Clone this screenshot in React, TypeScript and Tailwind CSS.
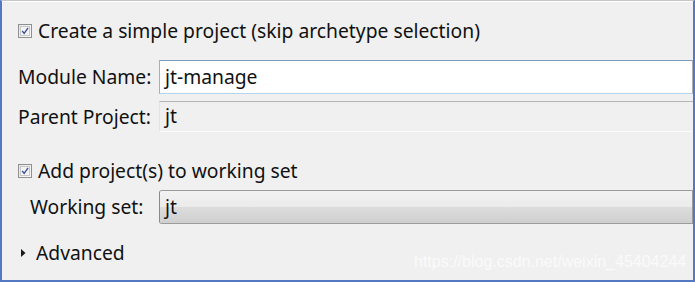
import React from 'react';

const font = { fontFamily: '"Noto Sans", "Open Sans", sans-serif' };

function Check() {
    return (
        <div className="w-[14px] h-[14px] border border-[#8e8f8f] bg-gradient-to-br from-[#e6e6e6] to-[#fbfbfb] flex items-center justify-center shrink-0">
            <div className="w-[10px] h-[10px] border border-[#c8c8c8] bg-[#f4f4f4] flex items-center justify-center">
                <svg width="10" height="10" viewBox="0 0 10 10">
                    <path d="M1.5 5 L4 8 L8.8 1.2" fill="none" stroke="#3b4f9a" strokeWidth="1.7" />
                </svg>
            </div>
        </div>
    );
}

export default function App() {
    return (
        <div
            className="w-[695px] h-[282px] bg-[#f0f0f0] border-l-2 border-r-2 border-b-2 border-[#5479c2] border-t border-t-[#c6c6c6] text-[19.3px] text-[#111] overflow-hidden"
            style={font}
        >
            <div className="border-t border-white h-full flex flex-col">
                {/* Simple project */}
                <div className="flex items-center gap-[6px] pl-[16px] mt-[20px] h-[18px]">
                    <Check />
                    <span className="leading-none">Create a simple project (skip archetype selection)</span>
                </div>

                {/* Module name */}
                <div className="flex items-center mt-[20px]">
                    <span className="w-[157px] pl-[16px] leading-none">Module Name:</span>
                    <div className="flex-1 h-[34px] bg-white border border-[#abadb3] border-t-[#7d9ac4] border-b-[#b4d4ee] flex items-center pl-[5px]">
                        jt-manage
                    </div>
                </div>

                {/* Parent project */}
                <div className="flex items-center mt-[7px]">
                    <span className="w-[157px] pl-[16px] leading-none">Parent Project:</span>
                    <div className="flex-1 h-[31px] bg-[#f0f0f0] border-t border-t-[#b5b5b5] border-b border-b-[#fbfbfb] border-l border-l-[#e3e3e3] flex items-center pl-[5px]">
                        jt
                    </div>
                </div>

                {/* Working set */}
                <div className="flex items-center gap-[6px] pl-[16px] mt-[30px] h-[18px]">
                    <Check />
                    <span className="leading-none">Add project(s) to working set</span>
                </div>

                <div className="flex items-center mt-[10px]">
                    <span className="w-[157px] pl-[28px] leading-none">Working set:</span>
                    <div className="flex-1 h-[34px] border border-[#9b9b9b] border-l-[#8a8a8a] rounded-l-[3px] flex flex-col overflow-hidden relative">
                        <div className="h-1/2 bg-gradient-to-b from-[#f2f2f2] to-[#ebebeb]" />
                        <div className="h-1/2 bg-gradient-to-b from-[#dddddd] to-[#cfcfcf]" />
                        <span className="absolute left-[5px] top-0 h-full flex items-center">jt</span>
                    </div>
                </div>

                {/* Advanced */}
                <div className="flex items-center mt-[19px] pl-[18px] relative">
                    <svg width="8" height="10" viewBox="0 0 8 10" className="mr-[8px]">
                        <path d="M1 1 L5.5 5 L1 9 Z" fill="#1a1a1a" />
                    </svg>
                    <span className="leading-none">Advanced</span>
                    <span
                        className="absolute left-[412px] top-[7px] text-[16px] text-white/70"
                        style={{ fontFamily: '"Liberation Sans", Arial, sans-serif' }}
                    >
                        https://blog.csdn.net/weixin_45404244
                    </span>
                </div>
            </div>
        </div>
    );
}
